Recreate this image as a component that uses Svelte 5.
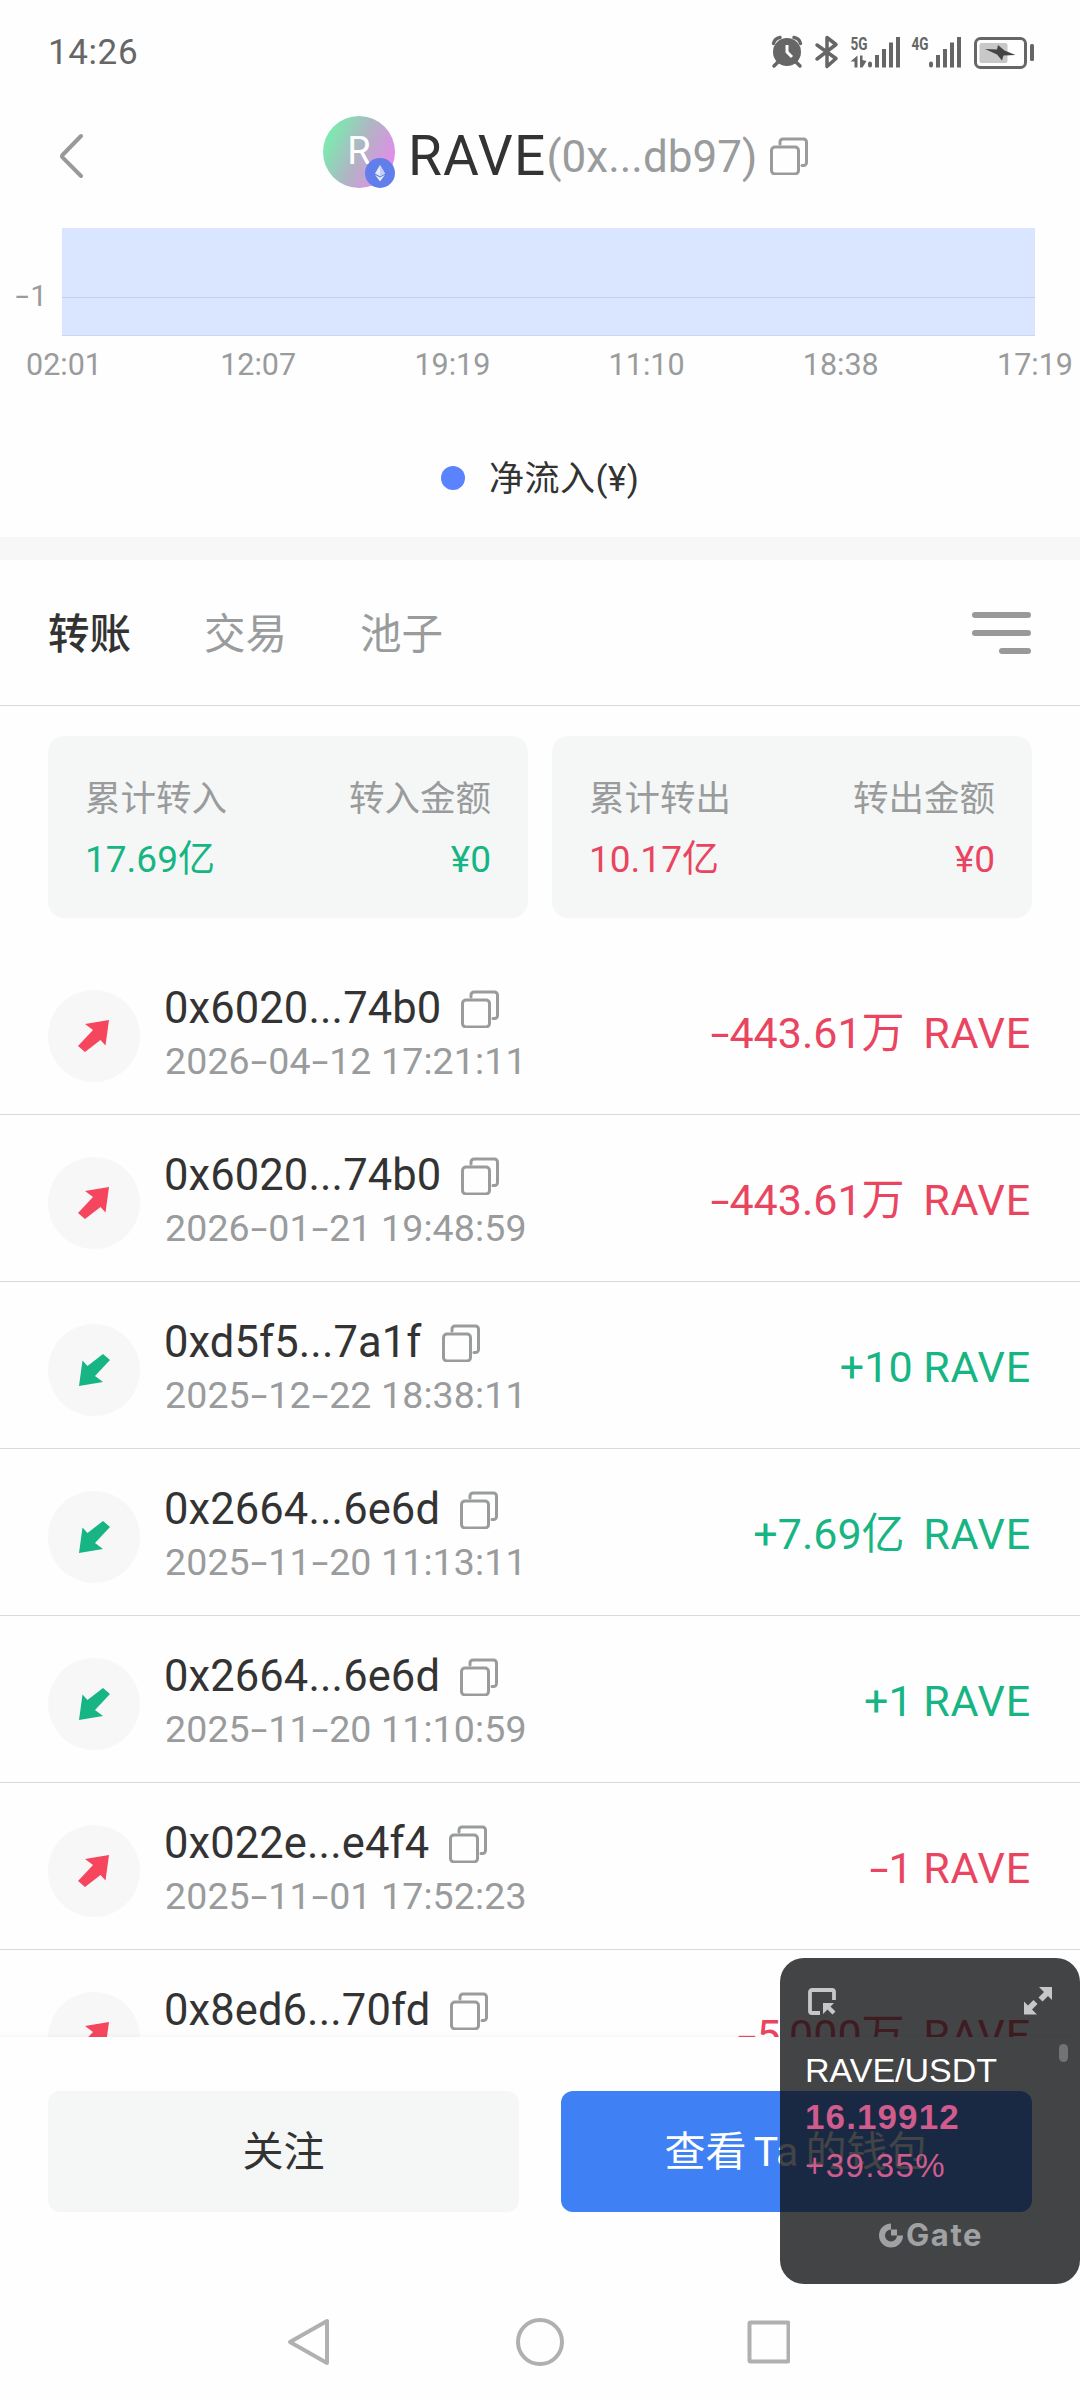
<script lang="ts">
  type Transfer = { address: string; date: string; time: string; amount: string; incoming?: boolean };

  const axisLabels: string[] = ['02:01', '12:07', '19:19', '11:10', '18:38', '17:19'];

  const tabs: string[] = ['转账', '交易', '池子'];
  let activeTab: string = '转账';

  const totals = [
    { label: '累计转入', value: '17.69亿', amountLabel: '转入金额', amount: '¥0', incoming: true },
    { label: '累计转出', value: '10.17亿', amountLabel: '转出金额', amount: '¥0', incoming: false },
  ];

  const transfers: Transfer[] = [
    { address: '0x6020...74b0', date: '2026-04-12', time: '17:21:11', amount: '-443.61万' },
    { address: '0x6020...74b0', date: '2026-01-21', time: '19:48:59', amount: '-443.61万' },
    { address: '0xd5f5...7a1f', date: '2025-12-22', time: '18:38:11', amount: '+10', incoming: true },
    { address: '0x2664...6e6d', date: '2025-11-20', time: '11:13:11', amount: '+7.69亿', incoming: true },
    { address: '0x2664...6e6d', date: '2025-11-20', time: '11:10:59', amount: '+1', incoming: true },
    { address: '0x022e...e4f4', date: '2025-11-01', time: '17:52:23', amount: '-1' },
    { address: '0x8ed6...70fd', date: '', time: '', amount: '-5,000万' },
  ];
</script>

{#snippet copyIcon()}
  <svg class="copy" width="38" height="38" viewBox="0 0 38 38" fill="none" stroke="#999b9c" stroke-width="3" stroke-linecap="round" stroke-linejoin="round">
    <rect x="1.5" y="10" width="27" height="27" rx="3.5" />
    <path d="M10 7V5a3 3 0 0 1 3-3h20.500a3 3 0 0 1 3 3v20.500a3 3 0 0 1-3 3h-1.500" />
  </svg>
{/snippet}

<div class="screen">
  <div class="status">
    <span class="clock">14:26</span>
    <svg width="270" height="36" viewBox="0 0 270 36" fill="#666">
      <!-- alarma -->
      <circle cx="16" cy="18" r="14" />
      <path d="M2.500 9.500q1-5 6.500-6M23 3.500q5.500 1 6.500 6M7 28l-4 4M25 28l4 4" fill="none" stroke="#666" stroke-width="3.500" stroke-linecap="round" />
      <path d="M16 11v7l5 5" fill="none" stroke="#fff" stroke-width="3" />
      <!-- bluetooth -->
      <path d="M46 11l19 13.500-9 8V3.500l9 7L46 25" fill="none" stroke="#666" stroke-width="3.500" stroke-linecap="round" stroke-linejoin="round" />
      <text x="79.500" y="16" class="net" textLength="17" lengthAdjust="spacingAndGlyphs">5G</text>
      <path d="M79.500 27.500l7-6v12h-3v-6zM89 21.500h2.500v4.500l4 1-4 6.500H89z" />
      <path d="M97 29.500q0-2 2-2t2 2v2q0 2-2 2t-2-2zM104 21h4v12.500h-4zM111 15h4v18.500h-4zM118 8.500h4v25h-4zM125 3h4v30.500h-4z" />
      <text x="140.500" y="16" class="net" textLength="17" lengthAdjust="spacingAndGlyphs">4G</text>
      <path d="M158 29.500q0-2 2-2t2 2v2q0 2-2 2t-2-2zM165 21h4v12.500h-4zM172 15h4v18.500h-4zM179 8.500h4v25h-4zM186 3h4v30.500h-4z" />
      <!-- batería -->
      <rect x="204.500" y="4.500" width="50" height="29" rx="5" fill="none" stroke="#666" stroke-width="3" />
      <rect x="208.500" y="9" width="28" height="20" rx="2" fill="#c8c8c8" />
      <path d="M214 15l12 .5 1-4.500 6.500 5.500 11 4.500-12 .5-1.500 5-5-6z" fill="#444" />
      <rect x="259" y="10" width="4" height="17" rx="1.500" />
    </svg>
  </div>

  <header class="header">
    <svg class="back" width="26" height="46" viewBox="0 0 26 46" fill="none" stroke="#999" stroke-width="4" stroke-linecap="round" stroke-linejoin="round">
      <path d="M22 3L3.500 22q-1 1.200 0 2.400L22 43" />
    </svg>
    <div class="avatar">
      <span>R</span>
      <svg class="chain" width="30" height="30" viewBox="0 0 30 30">
        <circle cx="15" cy="15" r="15" fill="#627eea" />
        <path d="M15 7l-5 8.500 5 2.800 5-2.800z" fill="#fff" opacity=".85" />
        <path d="M15 7v11.300l5-2.800z" fill="#c5cff6" />
        <path d="M15 19.500l-5-2.800 5 6.800 5-6.800z" fill="#fff" opacity=".85" />
      </svg>
    </div>
    <span class="symbol">RAVE</span>
    <span class="contract">(0x...db97)</span>
    {@render copyIcon()}
  </header>

  <section class="chart">
    <div class="plot">
      <span class="y-label"><span class="dash">-</span>1</span>
      <div class="area"><div class="grid-line"></div></div>
    </div>
    <div class="x-axis">
      {#each axisLabels as label}
        <span>{label}</span>
      {/each}
    </div>
    <div class="legend">
      <i></i>
      <span>净流入(¥)</span>
    </div>
  </section>

  <nav class="tabs">
    {#each tabs as tab}
      <button class:active={tab === activeTab} on:click={() => (activeTab = tab)}>{tab}</button>
    {/each}
    <svg class="menu" width="60" height="42" viewBox="0 0 60 42" fill="#999">
      <rect width="59" height="6" rx="3" />
      <rect y="18" width="59" height="6" rx="3" />
      <rect x="27" y="36" width="32" height="6" rx="3" />
    </svg>
  </nav>

  <section class="totals">
    {#each totals as total}
      <div class="card" class:incoming={total.incoming}>
        <div class="line label"><span>{total.label}</span><span>{total.amountLabel}</span></div>
        <div class="line value"><span>{total.value}</span><span>{total.amount}</span></div>
      </div>
    {/each}
  </section>

  <ul class="list">
    {#each transfers as item}
      <li class:incoming={item.incoming}>
        <span class="direction">
          <svg width="32" height="32" viewBox="0 0 32 32">
            <path d="M31 0L27.500 25.500 22.500 20 7 32 0 26 15 10 7 4z" />
          </svg>
        </span>
        <div class="info">
          <div class="address"><span>{item.address}</span>{@render copyIcon()}</div>
          <div class="date">
            {#each item.date.split('-') as part, i}{#if i > 0}<span class="dash">-</span>{/if}{part}{/each}
            {item.time}
          </div>
        </div>
        <div class="amount">
          {#if item.amount.startsWith('-')}<span class="dash">-</span>{item.amount.slice(1)}{:else}{item.amount}{/if}
          <span class="unit" class:wide={/[万亿]$/.test(item.amount)}>RAVE</span>
        </div>
      </li>
    {/each}
  </ul>

  <footer class="actions">
    <button>关注</button>
    <button class="primary">查看 Ta 的钱包</button>
  </footer>

  <div class="system-nav">
    <svg width="504" height="50" viewBox="0 0 504 50" fill="none" stroke="#b0b0b0" stroke-width="4" stroke-linejoin="round">
      <path d="M41 4v42L4 25z" />
      <circle cx="254" cy="25" r="22" />
      <rect x="463.500" y="5.500" width="39" height="39" rx="1" />
    </svg>
  </div>

  <!-- ventana flotante con la cotización -->
  <aside class="ticker">
    <div class="ticker-top">
      <svg width="32" height="30" viewBox="0 0 32 30" fill="#c6c7c7">
        <path d="M15 26H7a2 2 0 0 1-2-2V5a2 2 0 0 1 2-2h20a2 2 0 0 1 2 2v8" fill="none" stroke="#c6c7c7" stroke-width="3.800" />
        <path d="M18 16h11l-3.500 3.500 5 5-3 3-5-5L18 27z" />
      </svg>
      <svg width="28" height="28" viewBox="0 0 28 28" fill="#c6c7c7">
        <path d="M15 0H28v13l-4-4-5.500 5.500-4-4L20 5zM0 14.500l4 4L9.500 13l4 4L8 22.500l5 5H0z" />
      </svg>
    </div>
    <div class="pair">RAVE/USDT</div>
    <div class="price">16.19912</div>
    <div class="change">+39.35%</div>
    <div class="brand">
      <svg width="25" height="25" viewBox="0 0 25 25">
        <path d="M12 3.500a9 9 0 1 0 9 9" fill="none" stroke="#9fa1a2" stroke-width="6" />
        <rect x="12" y="6.500" width="6" height="6" fill="#9fa1a2" />
      </svg>
      <span>Gate</span>
    </div>
    <i class="thumb"></i>
  </aside>
</div>

<style>
  :global(body) {
    margin: 0;
    background: #fefefe;
  }

  .screen {
    position: relative;
    display: flex;
    flex-direction: column;
    width: 1080px;
    height: 2400px;
    overflow: hidden;
    background: #fefefe;
    color: #333;
    font-family: Roboto, 'Noto Sans CJK SC', sans-serif;
  }

  svg {
    display: block;
    flex: none;
  }

  button {
    border: none;
    padding: 0;
    background: none;
    font: inherit;
    color: inherit;
  }

  .dash {
    display: inline-block;
    transform: scaleX(1.6);
    margin: 0 4px;
  }

  .status {
    display: flex;
    justify-content: space-between;
    align-items: center;
    height: 104px;
    padding: 0 39px 0 48px;
  }

  .clock {
    font-size: 35px;
    letter-spacing: 0.6px;
    color: #666;
  }

  .net {
    font-size: 19px;
    font-weight: 700;
  }

  .header {
    display: flex;
    align-items: center;
    height: 104px;
    padding-left: 59px;
  }

  .avatar {
    position: relative;
    width: 72px;
    height: 72px;
    margin: -8px 13px 0 238px;
    border-radius: 50%;
    background: linear-gradient(115deg, #7ee8b0 15%, #b0b4c4 50%, #e888ee 90%);
    color: #fff;
    font-size: 38px;
    line-height: 70px;
    text-align: center;
  }

  .chain {
    position: absolute;
    right: 0;
    bottom: 0;
  }

  .symbol {
    font-size: 55px;
    letter-spacing: 1.2px;
  }

  .contract {
    margin: 2px 13px 0 0;
    font-size: 44px;
    color: #999b9c;
  }

  .chart {
    height: 309px;
    padding-top: 20px;
    border-bottom: 23px solid #f7f7f7;
  }

  .plot {
    display: flex;
    height: 108px;
  }

  .y-label {
    width: 62px;
    padding-top: 50px;
    box-sizing: border-box;
    padding-left: 14px;
    font-size: 30px;
    line-height: 36px;
    color: #999b9c;
  }

  .area {
    width: 973px;
    box-sizing: border-box;
    border-bottom: 1px solid #c9d6ee;
    background: #dae6ff;
  }

  .grid-line {
    height: 69px;
    border-bottom: 1px solid #c2cfe8;
  }

  .x-axis {
    display: flex;
    justify-content: space-between;
    width: 1047px;
    margin: 10px 0 0 26px;
    font-size: 30.5px;
    line-height: 38px;
    color: #999b9c;
  }

  .legend {
    display: flex;
    align-items: center;
    margin: 66px 0 0 441px;
    font-size: 35px;
    line-height: 52px;
    letter-spacing: 0.5px;
  }

  .legend span {
    margin-top: 4px;
  }

  .legend i {
    width: 24px;
    height: 24px;
    margin-right: 24px;
    border-radius: 50%;
    background: #5b82ff;
  }

  .tabs {
    display: flex;
    align-items: center;
    gap: 73px;
    height: 145px;
    padding: 0 48px;
    border-bottom: 1px solid #d8dada;
    font-size: 41.5px;
    color: #999b9c;
  }

  .tabs button {
    margin-top: -3px;
  }

  .tabs .active {
    font-weight: 500;
    color: #333;
  }

  .menu {
    margin-left: auto;
  }

  .totals {
    display: flex;
    gap: 24px;
    padding: 30px 48px;
  }

  .card {
    flex: 1;
    height: 182px;
    box-sizing: border-box;
    padding: 36px 37px 0;
    border-radius: 16px;
    background: #f5f7f7;
    color: #ea4560;
  }

  .line {
    display: flex;
    justify-content: space-between;
    font-size: 35.5px;
    line-height: 54px;
  }

  .line.label {
    color: #999b9c;
  }

  .line.value {
    margin-top: 7px;
    font-size: 37px;
  }

  .incoming {
    color: #17b583;
  }

  .list {
    flex: none;
    height: 1089px;
    margin: 0;
    padding: 0;
    overflow: hidden;
    list-style: none;
  }

  li {
    display: flex;
    align-items: center;
    height: 167px;
    box-sizing: border-box;
    padding: 0 49px 0 48px;
    border-bottom: 1px solid #d8dada;
    color: #ea4560;
  }

  li.incoming {
    color: #17b583;
  }

  .direction {
    display: flex;
    align-items: center;
    justify-content: center;
    width: 92px;
    height: 92px;
    margin: 10px 24px 0 0;
    border-radius: 50%;
    background: #f7f7f7;
  }

  .direction svg {
    fill: #f5465e;
  }

  .incoming .direction svg {
    fill: #17b583;
    transform: rotate(180deg);
  }

  .address {
    display: flex;
    align-items: center;
    gap: 20px;
    height: 52px;
    margin-top: 7px;
    font-size: 43.5px;
    letter-spacing: 0.1px;
    color: #333;
  }

  .date {
    height: 52px;
    margin-left: 1px;
    font-size: 37.5px;
    line-height: 52px;
    letter-spacing: 0.12px;
    color: #999b9c;
    white-space: nowrap;
  }

  .amount {
    height: 50px;
    margin: 4px 0 0 auto;
    font-size: 43px;
    line-height: 50px;
    white-space: nowrap;
  }

  .unit {
    letter-spacing: 0.8px;
  }

  .unit.wide {
    margin-left: 8px;
  }

  .actions {
    display: flex;
    gap: 42px;
    height: 239px;
    box-sizing: border-box;
    padding: 54px 48px 0;
    box-shadow: 0 -2px 4px rgba(0, 0, 0, 0.03);
  }

  .actions button {
    flex: 1;
    height: 121px;
    padding-bottom: 8px;
    border-radius: 12px;
    background: #f5f7f7;
    font-size: 41px;
  }

  .actions .primary {
    background: #3f80f5;
    color: #fff;
    word-spacing: -3px;
  }

  .system-nav {
    display: flex;
    padding: 41px 0 0 286px;
  }

  .ticker {
    position: absolute;
    left: 780px;
    top: 1958px;
    width: 300px;
    height: 326px;
    box-sizing: border-box;
    padding: 29px 28px 0 25px;
    border-radius: 24px;
    background: rgba(14, 16, 17, 0.78);
    color: #cf5c8c;
    font-family: 'Liberation Sans', sans-serif;
  }

  .ticker-top {
    display: flex;
    justify-content: space-between;
    height: 62px;
  }

  .pair {
    font-size: 34px;
    line-height: 42px;
    color: #fff;
  }

  .price {
    margin-top: 4px;
    font-size: 35px;
    font-weight: 700;
    line-height: 44px;
    letter-spacing: 1.1px;
  }

  .change {
    margin-top: 4px;
    font-size: 33px;
    line-height: 46px;
    letter-spacing: 1.4px;
  }

  .brand {
    display: flex;
    align-items: center;
    gap: 2px;
    margin: 26px 0 0 74px;
    font-family: Inter, sans-serif;
    font-size: 31px;
    font-weight: 700;
    line-height: 40px;
    letter-spacing: 1.6px;
    color: #9fa1a2;
  }

  .thumb {
    position: absolute;
    right: 12px;
    top: 86px;
    width: 9px;
    height: 18px;
    border-radius: 5px;
    background: #727374;
  }
</style>
